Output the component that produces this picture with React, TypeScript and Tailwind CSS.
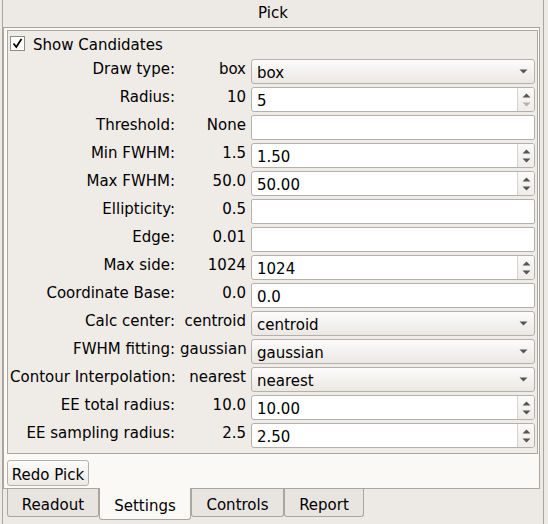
import React from 'react';

type Kind = 'combo' | 'spin' | 'edit';

interface Row {
  label: string;
  value: string;
  kind: Kind;
  text: string;
  downOff?: boolean;
}

const rows: Row[] = [
  { label: 'Draw type:', value: 'box', kind: 'combo', text: 'box' },
  { label: 'Radius:', value: '10', kind: 'spin', text: '5', downOff: true },
  { label: 'Threshold:', value: 'None', kind: 'edit', text: '' },
  { label: 'Min FWHM:', value: '1.5', kind: 'spin', text: '1.50' },
  { label: 'Max FWHM:', value: '50.0', kind: 'spin', text: '50.00' },
  { label: 'Ellipticity:', value: '0.5', kind: 'edit', text: '' },
  { label: 'Edge:', value: '0.01', kind: 'edit', text: '' },
  { label: 'Max side:', value: '1024', kind: 'spin', text: '1024' },
  { label: 'Coordinate Base:', value: '0.0', kind: 'edit', text: '0.0' },
  { label: 'Calc center:', value: 'centroid', kind: 'combo', text: 'centroid' },
  { label: 'FWHM fitting:', value: 'gaussian', kind: 'combo', text: 'gaussian' },
  { label: 'Contour Interpolation:', value: 'nearest', kind: 'combo', text: 'nearest' },
  { label: 'EE total radius:', value: '10.0', kind: 'spin', text: '10.00' },
  { label: 'EE sampling radius:', value: '2.5', kind: 'spin', text: '2.50' },
];

function Combo({ text }: { text: string }) {
  return (
    <div className="h-[25px] flex items-center justify-between rounded-[3px] border border-[#b4b0ab] bg-gradient-to-b from-[#fdfcfb] to-[#ebe8e4] pl-[5px] pr-[6px]">
      <span className="translate-y-[2px]">{text}</span>
      <svg width="9" height="5" viewBox="0 0 9 5">
        <path d="M0.5 0.5 L8.5 0.5 L4.5 4.5 Z" fill="#555" />
      </svg>
    </div>
  );
}

function Spin({ text, downOff }: { text: string; downOff?: boolean }) {
  return (
    <div className="h-[25px] flex rounded-[3px] border border-[#b4b0ab] bg-white overflow-hidden">
      <div className="flex-1 flex items-center pl-[5px]">
        <span className="translate-y-[2px]">{text}</span>
      </div>
      <div className="w-[17px] flex flex-col items-center justify-center gap-[4px] border-l border-[#d6d2ce] bg-gradient-to-b from-[#fbfaf9] to-[#efece9]">
        <svg width="9" height="5" viewBox="0 0 9 5">
          <path d="M0.5 4.5 L8.5 4.5 L4.5 0.5 Z" fill="#555" />
        </svg>
        <svg width="9" height="5" viewBox="0 0 9 5">
          <path d="M0.5 0.5 L8.5 0.5 L4.5 4.5 Z" fill={downOff ? '#b3b0ad' : '#555'} />
        </svg>
      </div>
    </div>
  );
}

function Edit({ text }: { text: string }) {
  return (
    <div className="h-[25px] flex items-center rounded-[2px] border border-[#b4b0ab] bg-white pl-[5px]">
      <span className="translate-y-[2px]">{text}</span>
    </div>
  );
}

const tabs = ['Readout', 'Settings', 'Controls', 'Report'];
const tabW = ['w-[92px]', 'w-[92px]', 'w-[93px]', 'w-[80px]'];

export default function App() {
  return (
    <div className="w-[548px] h-[524px] overflow-hidden bg-[#edeae6] text-black font-['DejaVu_Sans',sans-serif] text-[15px] leading-[17px]">
      <div className="ml-[2px] w-[542px] h-full border-x border-[#a9a5a1] flex flex-col">
        <div className="h-[27px] pt-[5px] text-center">Pick</div>

        {/* tab page */}
        <div className="mr-[3px] h-[462px] border border-[#a9a5a1] bg-[#fbf9f6] flex flex-col">
          <div className="ml-[3px] mr-[1px] mt-[2px] h-[424px] border border-[#aba7a3] bg-[#efebe7] pl-[2px] pr-[2px] pt-[5px]">
            <div className="flex items-center h-[15px] gap-[8px]">
              <div className="w-[15px] h-[15px] border border-[#8e8a86] bg-white flex items-center justify-center">
                <svg width="11" height="11" viewBox="0 0 11 11">
                  <path d="M1.5 5.5 L4.3 9 L9.5 1" fill="none" stroke="#000" strokeWidth="1.8" />
                </svg>
              </div>
              <span className="translate-y-[2px]">Show Candidates</span>
            </div>

            <div className="mt-[8px] grid grid-cols-[165px_66px_1fr] gap-x-[5px] gap-y-[3px]">
              {rows.map((r) => (
                <React.Fragment key={r.label}>
                  <div className="pt-[2px] text-right whitespace-nowrap">{r.label}</div>
                  <div className="pt-[2px] text-right whitespace-nowrap">{r.value}</div>
                  {r.kind === 'combo' && <Combo text={r.text} />}
                  {r.kind === 'spin' && <Spin text={r.text} downOff={r.downOff} />}
                  {r.kind === 'edit' && <Edit text={r.text} />}
                </React.Fragment>
              ))}
            </div>
          </div>

          <div className="ml-[3px] mt-[6px] w-[82px] h-[26px] flex items-center justify-center rounded-[3px] border border-[#b4b0ab] bg-gradient-to-b from-[#fdfcfb] to-[#ece9e5]">
            <span className="translate-y-[2px]">Redo Pick</span>
          </div>
        </div>

        {/* tab bar */}
        <div className="flex ml-[4px] items-start">
          {tabs.map((t, i) =>
            t === 'Settings' ? (
              <div
                key={t}
                className={`${tabW[i]} -mt-[1px] h-[32px] flex items-center justify-center pt-[6px] border-x border-b border-[#a9a5a1] rounded-b-[3px] bg-[#fbf9f6]`}
              >
                {t}
              </div>
            ) : (
              <div
                key={t}
                className={`${tabW[i]} h-[28px] flex items-center justify-center pt-[5px] border-x border-b border-[#a9a5a1] rounded-b-[3px] bg-[#e8e4e0]`}
              >
                {t}
              </div>
            )
          )}
        </div>
      </div>
    </div>
  );
}
